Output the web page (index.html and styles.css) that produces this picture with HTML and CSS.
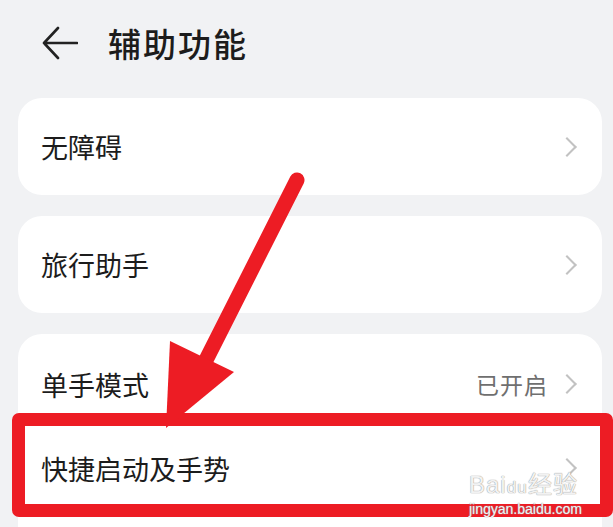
FILE: index.html
```html
<!DOCTYPE html>
<html lang="zh-CN">
<head>
    <meta charset="UTF-8">
    <meta name="viewport" content="width=device-width, initial-scale=1.0">
    <title>辅助功能</title>
    <link rel="stylesheet" href="styles.css">
</head>
<body>
    <div class="screen">
        <div class="header">
            <svg class="back" width="36" height="36" viewBox="0 0 36 36">
                <path d="M35 18 H2 M16 3 L2 18 L16 33" fill="none" stroke="#222" stroke-width="2.6" stroke-linecap="round" stroke-linejoin="round"/>
            </svg>
            <div class="title">辅助功能</div>
        </div>

        <div class="list">
            <div class="card">
                <div class="row">
                    <span class="label">无障碍</span>
                    <span class="chev"></span>
                </div>
            </div>
            <div class="card">
                <div class="row">
                    <span class="label">旅行助手</span>
                    <span class="chev"></span>
                </div>
            </div>
            <div class="card group">
                <div class="row">
                    <span class="label">单手模式</span>
                    <span class="value">已开启</span>
                    <span class="chev"></span>
                </div>
                <div class="row">
                    <span class="label">快捷启动及手势</span>
                    <span class="chev"></span>
                </div>
            </div>
        </div>

        <!-- annotation on top of the screenshot -->
        <div class="highlight"></div>
        <svg class="pointer" width="613" height="527" viewBox="0 0 613 527">
            <line x1="297" y1="180" x2="205" y2="362" stroke="#ed1c24" stroke-width="15" stroke-linecap="round"/>
            <polygon points="170,341 234,372 166,428" fill="#ed1c24"/>
        </svg>
        <div class="watermark">
            <div class="wm-logo">Bai<span class="paw">du</span>经验</div>
            <div class="wm-url">jingyan.baidu.com</div>
        </div>
    </div>
</body>
</html>
```

FILE: styles.css
```css
body {
    margin: 0;
    padding: 0;
    background-color: #f1f2f4;
    font-family: "Noto Sans CJK SC", "Noto Sans", sans-serif;
    color: #1c1c1c;
}
.screen {
    position: relative;
    width: 613px;
    height: 527px;
    overflow: hidden;
}
.header {
    display: flex;
    align-items: center;
    height: 86px;
    padding-left: 42px;
}
.back {
    margin-right: 30px;
}
.title {
    font-size: 33px;
    font-weight: 500;
    letter-spacing: 2px;
}
.list {
    display: flex;
    flex-direction: column;
    gap: 21px;
    margin-top: 12px;
    margin-left: 18px;
    width: 584px;
}
.card {
    background-color: #ffffff;
    border-radius: 24px;
}
.row {
    display: flex;
    align-items: center;
    height: 97px;
    padding: 0 26px 0 23px;
}
.group {
    padding-top: 8px;
    height: 220px;
}
.group .row {
    height: 84px;
}
.label {
    flex: 1;
    font-size: 27px;
}
.value {
    font-size: 23px;
    color: #6f6f6f;
    margin-right: 12px;
    letter-spacing: 1px;
}
.chev {
    width: 12px;
    height: 12px;
    border-top: 2px solid #c2c2c2;
    border-right: 2px solid #c2c2c2;
    transform: rotate(45deg);
    margin-right: 2px;
}
.highlight {
    position: absolute;
    left: 12px;
    top: 413px;
    width: 575px;
    height: 78px;
    border: 13px solid #ed1c24;
    border-radius: 7px;
}
.pointer {
    position: absolute;
    left: 0;
    top: 0;
}
.watermark {
    position: absolute;
    left: 469px;
    top: 472px;
    color: rgba(255, 255, 255, 0.9);
    text-shadow: 0 0 1px #9a9a9a, 0 0 1px #9a9a9a;
    font-family: "Liberation Sans", sans-serif;
}
.wm-logo {
    font-size: 24px;
    line-height: 26px;
    letter-spacing: 1px;
}
.paw {
    font-size: 17px;
}
.wm-url {
    font-size: 14px;
    line-height: 15px;
    margin-top: 1px;
}
```
